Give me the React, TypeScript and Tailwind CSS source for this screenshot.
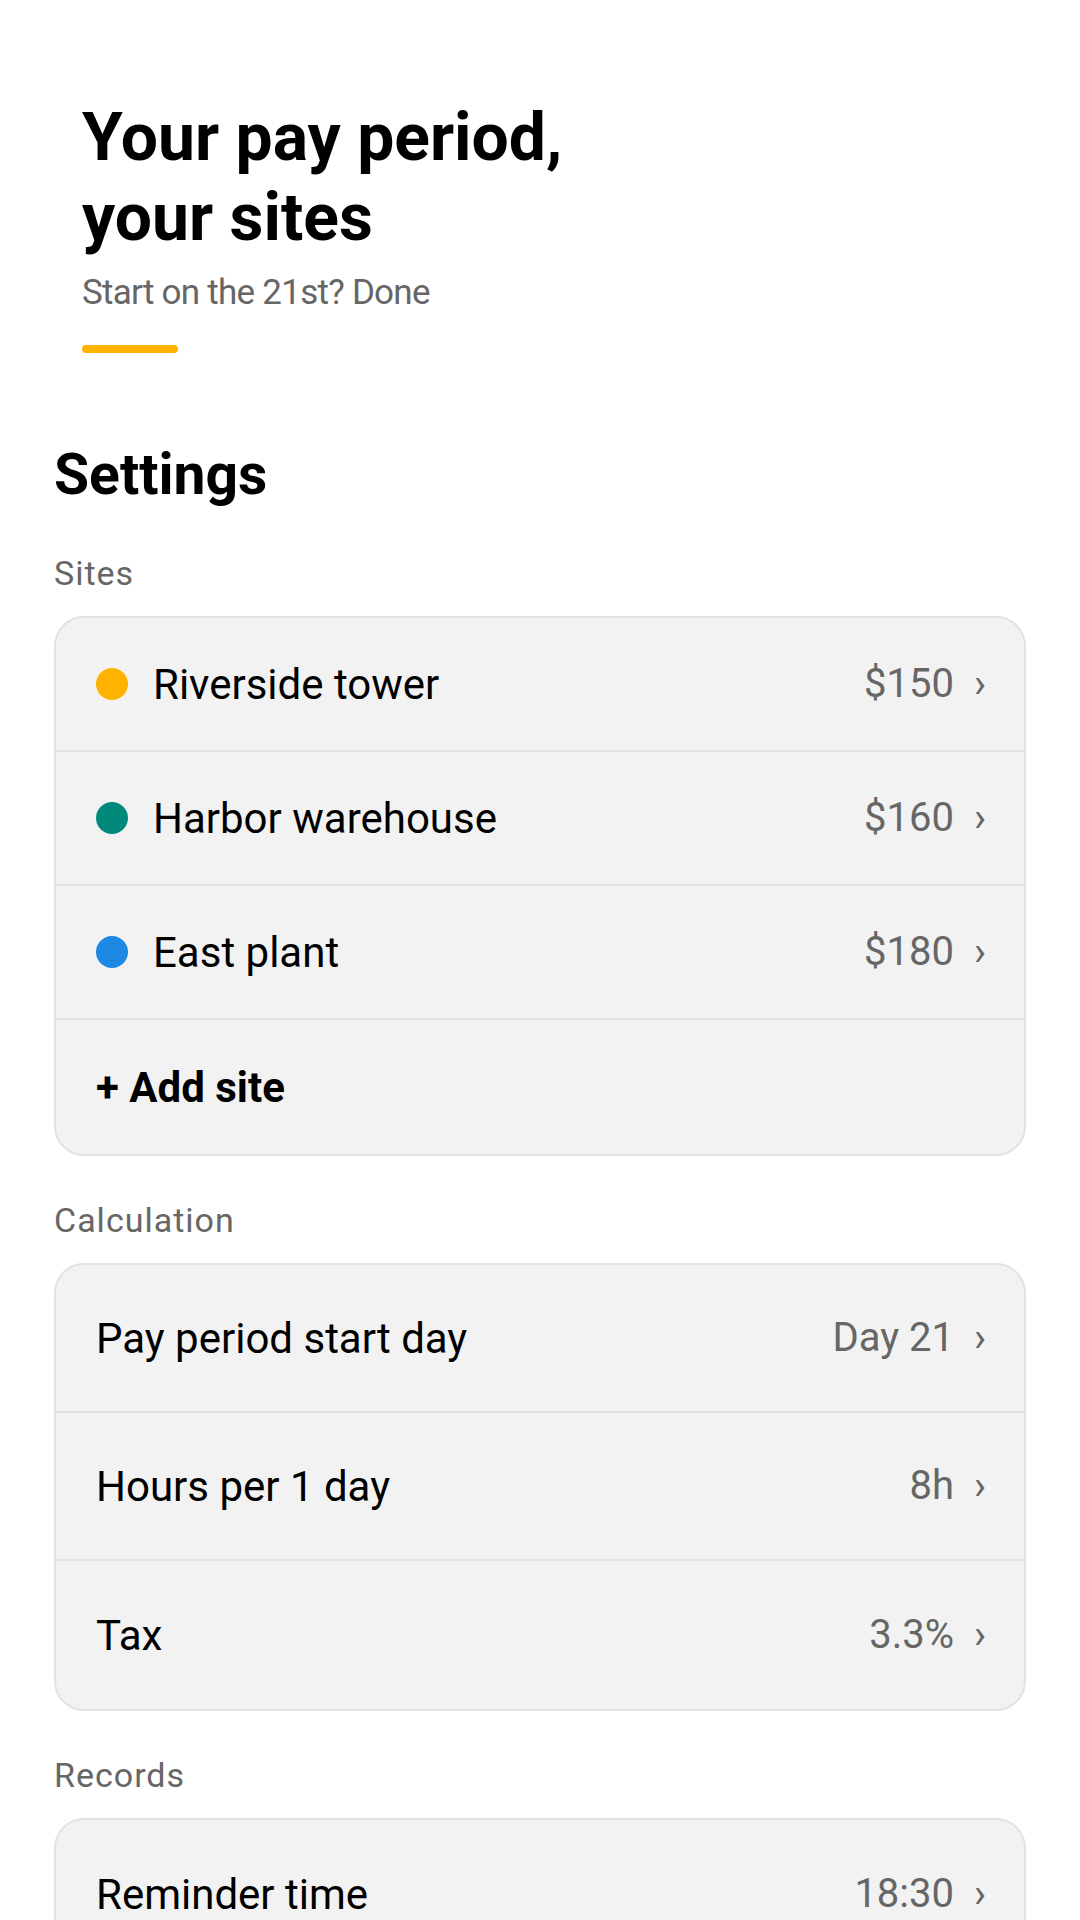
import React from "react";

type Site = { name: string; rate: string; dot: string };

const sites: Site[] = [
  { name: "Riverside tower", rate: "$150", dot: "bg-[#ffb300]" },
  { name: "Harbor warehouse", rate: "$160", dot: "bg-[#00897b]" },
  { name: "East plant", rate: "$180", dot: "bg-[#1e88e5]" },
];

const calcRows = [
  { label: "Pay period start day", value: "Day 21" },
  { label: "Hours per 1 day", value: "8h" },
  { label: "Tax", value: "3.3%" },
];

const recordRows = [{ label: "Reminder time", value: "18:30" }];

const Value = ({ text }: { text: string }) => (
  <div className="ml-auto flex items-center gap-[20px] text-[#666666]">
    <span className="text-[40px]">{text}</span>
    <span className="text-[40px]">›</span>
  </div>
);

const SectionLabel = ({ children }: { children: React.ReactNode }) => (
  <div className="text-[34px] leading-[44px] tracking-[1px] text-[#666666] mb-[21px]">
    {children}
  </div>
);

const Card = ({ children }: { children: React.ReactNode }) => (
  <div className="rounded-[30px] border-2 border-[#e2e2e2] bg-[#f2f2f2] overflow-hidden divide-y-2 divide-[#e2e2e2]">
    {children}
  </div>
);

export default function App() {
  return (
    <div
      className="min-h-screen bg-white text-black px-[54px]"
      style={{ fontFamily: "Roboto, 'Noto Sans', sans-serif" }}
    >
      {/* hero */}
      <header className="pt-[98px] pl-[28px]">
        <h1 className="text-[66px] leading-[80px] font-bold">
          Your pay period,
          <br />
          your sites
        </h1>
        <p className="mt-[12px] text-[35px] leading-[45px] tracking-[-0.75px] text-[#666666]">
          Start on the 21st? Done
        </p>
        <div className="mt-[30px] h-[8px] w-[96px] rounded-full bg-[#ffb300]" />
      </header>

      <h2 className="mt-[86px] text-[57px] leading-[72px] font-bold">Settings</h2>

      {/* Sites */}
      <section className="mt-[40px]">
        <SectionLabel>Sites</SectionLabel>
        <Card>
          {sites.map((s) => (
            <div
              key={s.name}
              className="flex items-center h-[134px] pl-[40px] pr-[38px] text-[42px]"
            >
              <span className={`w-[32px] h-[32px] rounded-full ${s.dot}`} />
              <span className="ml-[25px]">{s.name}</span>
              <Value text={s.rate} />
            </div>
          ))}
          <div className="flex items-center h-[134px] pl-[40px] pr-[38px] text-[42px] font-bold">
            + Add site
          </div>
        </Card>
      </section>

      {/* Calculation */}
      <section className="mt-[42px]">
        <SectionLabel>Calculation</SectionLabel>
        <Card>
          {calcRows.map((r) => (
            <div
              key={r.label}
              className="flex items-center h-[148px] pl-[40px] pr-[38px] text-[42px]"
            >
              <span>{r.label}</span>
              <Value text={r.value} />
            </div>
          ))}
        </Card>
      </section>

      {/* Records */}
      <section className="mt-[42px] pb-[60px]">
        <SectionLabel>Records</SectionLabel>
        <Card>
          {recordRows.map((r) => (
            <div
              key={r.label}
              className="flex items-center h-[148px] pl-[40px] pr-[38px] text-[42px]"
            >
              <span>{r.label}</span>
              <Value text={r.value} />
            </div>
          ))}
        </Card>
      </section>
    </div>
  );
}
